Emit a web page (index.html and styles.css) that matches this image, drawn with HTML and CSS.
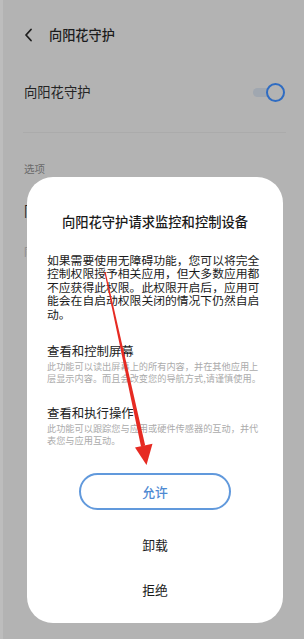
FILE: index.html
```html
<!DOCTYPE html>
<html lang="zh-CN">
<head>
<meta charset="utf-8">
<title>向阳花守护</title>
<link rel="stylesheet" href="styles.css">
</head>
<body>
<div class="screen">
  <header class="topbar">
    <svg class="back" width="9" height="14" viewBox="0 0 9 14"><polyline points="7,1.5 2,7 7,12.5" fill="none" stroke="#1e1e1e" stroke-width="1.8" stroke-linecap="round" stroke-linejoin="round"/></svg>
    <span class="topbar-title">向阳花守护</span>
  </header>
  <div class="row">
    <span class="row-label">向阳花守护</span>
    <span class="toggle"><span class="track"></span><span class="knob"></span></span>
  </div>
  <div class="divider"></div>
  <div class="section-label">选项</div>
  <div class="under-row">同</div>
  <div class="under-sub">同</div>
</div>

<div class="dialog">
  <h1 class="dlg-title">向阳花守护请求监控和控制设备</h1>
  <p class="dlg-body">如果需要使用无障碍功能，您可以将完全控制权限授予相关应用，但大多数应用都不应获得此权限。此权限开启后，应用可能会在自启动权限关闭的情况下仍然自启动。</p>
  <div class="perm">
    <div class="perm-title">查看和控制屏幕</div>
    <div class="perm-desc">此功能可以读出屏幕上的所有内容，并在其他应用上层显示内容。而且会改变您的导航方式,请谨慎使用。</div>
  </div>
  <div class="perm perm-second">
    <div class="perm-title">查看和执行操作</div>
    <div class="perm-desc">此功能可以跟踪您与应用或硬件传感器的互动，并代表您与应用互动。</div>
  </div>
  <div class="actions">
    <button class="btn-allow">允许</button>
    <button class="btn-plain btn-first">卸载</button>
    <button class="btn-plain">拒绝</button>
  </div>
</div>

<svg class="annotation" width="304" height="639" viewBox="0 0 304 639">
  <polygon points="105.6,271.9 104.4,272.1 141,446.4 145.2,445.6" fill="#e62a22"/>
  <polygon points="135,447.5 152.5,443.8 146.5,465" fill="#e62a22"/>
</svg>
</body>
</html>
```

FILE: styles.css
```css
html, body {
  margin: 0;
  padding: 0;
}
body {
  width: 304px;
  height: 639px;
  overflow: hidden;
  background: #b3b3b3;
  font-family: "Noto Sans CJK SC", "Noto Sans", sans-serif;
  position: relative;
  box-sizing: border-box;
  border-left: 3px solid #bdbdbd;
}
.screen {
  display: flex;
  flex-direction: column;
  margin-left: -3px;
}
.topbar {
  height: 70px;
  display: flex;
  align-items: center;
  padding-left: 24px;
  gap: 16px;
}
.back { display: block; }
.topbar-title {
  font-size: 13.2px;
  font-weight: 500;
  color: #1c1c1c;
  line-height: 18px;
}
.row {
  height: 44px;
  display: flex;
  align-items: center;
  justify-content: space-between;
  padding: 0 19px 0 24px;
}
.row-label {
  font-size: 13.3px;
  color: #242424;
  line-height: 18px;
}
.toggle {
  position: relative;
  width: 32px;
  height: 20px;
  display: flex;
  align-items: center;
}
.track {
  width: 24px;
  height: 9px;
  border-radius: 4.5px;
  background: #a0a7b0;
}
.knob {
  position: absolute;
  right: 0;
  top: 0.5px;
  width: 19px;
  height: 19px;
  box-sizing: border-box;
  border-radius: 50%;
  border: 2.8px solid #2f6cc2;
  background: #b3b3b3;
}
.divider {
  margin: 18px 18px 0 23px;
  height: 1px;
  background: #ababab;
}
.section-label {
  margin: 28px 0 0 24px;
  font-size: 10.5px;
  line-height: 16px;
  color: #6a6a6a;
}
.under-row {
  margin: 26px 0 0 24px;
  font-size: 13.3px;
  line-height: 16px;
  color: #242424;
}
.under-sub {
  margin: 25px 0 0 24px;
  font-size: 10.5px;
  line-height: 16px;
  color: #888;
}

.dialog {
  position: absolute;
  left: 24px;
  top: 177px;
  width: 256px;
  height: 446px;
  box-sizing: border-box;
  background: #fff;
  border-radius: 26px;
  padding: 36px 20px 11px 20px;
  display: flex;
  flex-direction: column;
}
.dlg-title {
  margin: 0;
  font-size: 13.3px;
  font-weight: 500;
  line-height: 18px;
  color: #1a1a1a;
  text-align: center;
  white-space: nowrap;
}
.dlg-body {
  margin: 22px 0 0 0;
  font-size: 11.8px;
  line-height: 13.4px;
  color: #1a1a1a;
}
.perm { margin-top: 23px; }
.perm-second { margin-top: 20.5px; }
.perm-title {
  font-size: 12.4px;
  line-height: 16px;
  color: #222;
}
.perm-desc {
  margin-top: 2px;
  font-size: 9.2px;
  line-height: 11.7px;
  color: #ababab;
}
.actions {
  margin-top: auto;
  display: flex;
  flex-direction: column;
  align-items: center;
}
button {
  font-family: inherit;
  background: none;
  border: none;
  padding: 0;
  cursor: pointer;
}
.btn-allow {
  width: 152px;
  height: 37.5px;
  box-sizing: border-box;
  border: 2.4px solid #6199dc;
  border-radius: 19px;
  color: #4e89d2;
  font-size: 12.8px;
  font-weight: 500;
}
.btn-plain {
  width: 152px;
  height: 45px;
  font-size: 12.8px;
  color: #1a1a1a;
}
.btn-first { margin-top: 12px; }

.annotation {
  position: absolute;
  left: -3px;
  top: 0;
  pointer-events: none;
}
```
